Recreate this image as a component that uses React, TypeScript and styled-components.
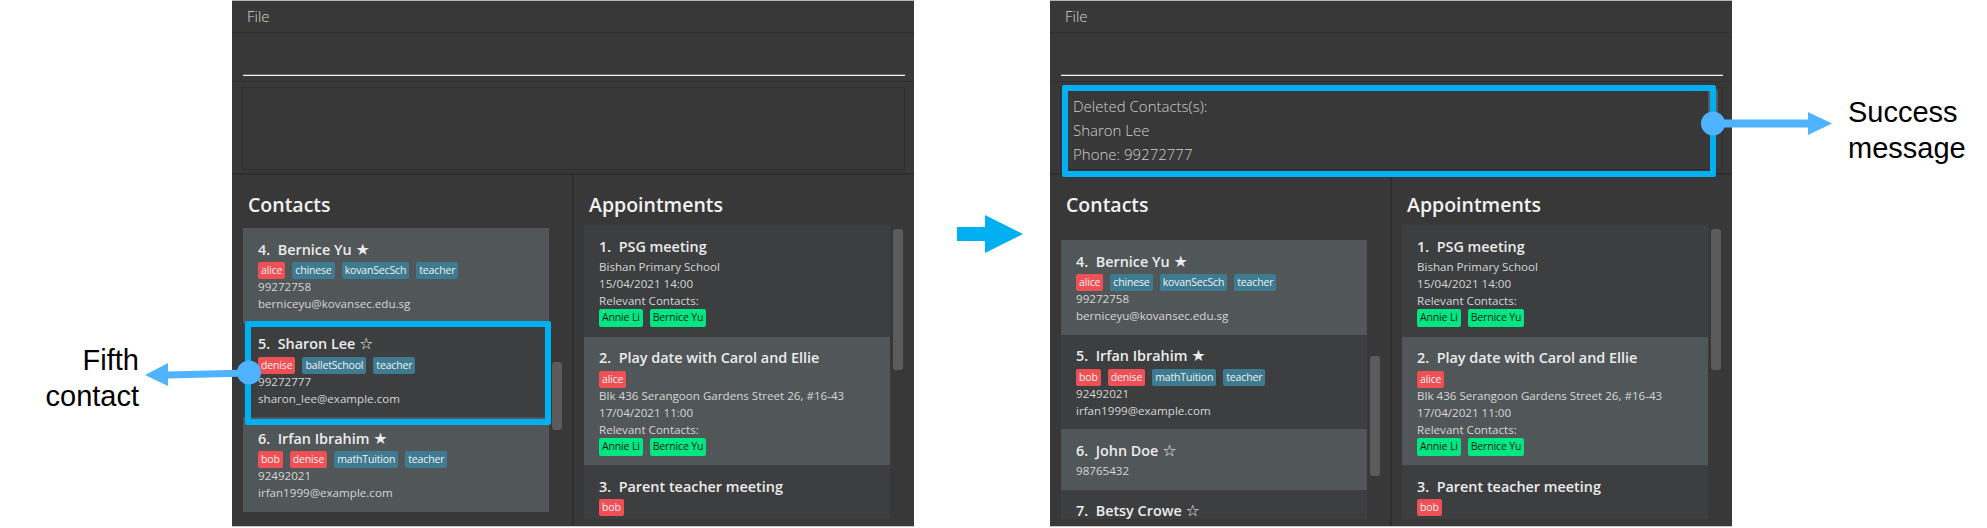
import styled, { createGlobalStyle } from "styled-components";

const GlobalStyle = createGlobalStyle`
  html, body { margin: 0; padding: 0; background: #ffffff; }
  * { box-sizing: border-box; }
`;

const UI_FONT = `"Open Sans", "Noto Sans", sans-serif`;
const ARIAL = `"Liberation Sans", Arial, sans-serif`;

const Page = styled.div`
  position: relative;
  display: flex;
  width: 1987px;
  height: 528px;
  overflow: hidden;
  background: #ffffff;
`;

const LeftNote = styled.div`
  width: 232px;
  padding: 342px 93px 0 0;
  font: 29px/36px ${ARIAL};
  color: #000000;
  text-align: right;
`;

const RightNote = styled.div`
  padding: 94px 0 0 116px;
  font: 29px/36px ${ARIAL};
  color: #000000;
`;

const Gutter = styled.div`
  width: 136px;
  padding: 215px 0 0 43px;
`;

const Window = styled.div`
  position: relative;
  display: flex;
  flex-direction: column;
  width: 682px;
  height: 527px;
  background: #383838;
  border-top: 1px solid #b5b5b5;
  border-bottom: 1px solid #c8c8c8;
  font-family: ${UI_FONT};
`;

const MenuBar = styled.div`
  height: 32px;
  padding-left: 15px;
  border-bottom: 1px solid #2e2e2e;
  font-size: 15px;
  font-weight: 300;
  line-height: 30px;
  color: #d6d6d6;
`;

const CommandPane = styled.div`
  height: 49px;
  padding: 0 9px 0 11px;
  border-bottom: 1px solid #2e2e2e;
`;

const CommandInput = styled.input`
  display: block;
  width: 100%;
  height: 43px;
  padding: 0;
  background: transparent;
  border: none;
  border-bottom: 1px solid #f2f2f2;
  box-shadow: 0 -1px 0 #6a6a6a inset;
  outline: none;
`;

const ResultPane = styled.div`
  height: 93px;
  padding: 5px 9px 4px 10px;
  border-bottom: 2px solid #2e2e2e;
`;

const ResultBox = styled.div`
  display: flex;
  justify-content: space-between;
  height: 83px;
  padding: 6px 4px 0 12px;
  border: 1px solid #2e2e2e;
`;

const ResultText = styled.div`
  font-size: 15px;
  font-weight: 300;
  line-height: 24px;
  color: #cfcfcf;
`;

const Columns = styled.div`
  display: flex;
  flex: 1;
  min-height: 0;
`;

const Column = styled.section<{ $width?: number; $inset: number }>`
  display: flex;
  flex-direction: column;
  ${(p) => (p.$width ? `width: ${p.$width}px;` : "flex: 1;")}
  min-width: 0;
  padding: 15px 0 7px ${(p) => p.$inset}px;
  ${(p) => (p.$width ? "border-right: 2px solid #2e2e2e;" : "")}
`;

const ColumnTitle = styled.h2<{ $gap: number }>`
  margin: 0 0 ${(p) => p.$gap}px 5px;
  font-size: 19.5px;
  font-weight: 600;
  line-height: 30px;
  color: #f2f2f2;
`;

const ListRow = styled.div`
  display: flex;
  flex: 1;
  gap: 3px;
  min-height: 0;
`;

const List = styled.div`
  width: 306px;
  overflow: hidden;
`;

const ScrollThumb = styled.div<{ $top: number; $height: number }>`
  width: 10px;
  height: ${(p) => p.$height}px;
  margin-top: ${(p) => p.$top}px;
  background: #5b5b5b;
  border-radius: 3px;
`;

const Card = styled.div<{ $odd: boolean }>`
  padding: 12.5px 10px 9.5px 15px;
  background: ${(p) => (p.$odd ? "#515658" : "#3c3e3f")};
`;

const Name = styled.div`
  font-size: 14.4px;
  font-weight: 600;
  line-height: 18px;
  color: #ececec;
  white-space: pre;
`;

const Star = styled.span`
  font-family: "DejaVu Sans", sans-serif;
  font-size: 16px;
  font-weight: 400;
  line-height: 18px;
`;

const TagRow = styled.div<{ $offset?: number }>`
  display: flex;
  gap: 7px;
  margin-top: ${(p) => p.$offset ?? 3.5}px;
`;

const Tag = styled.span<{ $kind: "red" | "blue" | "green" }>`
  height: ${(p) => (p.$kind === "green" ? 18 : 17)}px;
  padding: 0 3px;
  border-radius: 2px;
  font-size: 10.5px;
  letter-spacing: -0.15px;
  line-height: 17px;
  color: ${(p) => (p.$kind === "green" ? "#0b1f16" : "#f0f0f0")};
  background: ${(p) =>
    p.$kind === "red" ? "#ef5055" : p.$kind === "blue" ? "#3e7b91" : "#00e683"};
`;

const Detail = styled.div`
  padding-bottom: 2px;
  font-size: 11.6px;
  line-height: 15px;
  color: #d6d6d6;
`;

const Highlight = styled.div<{ $left: number; $top: number; $width: number; $height: number }>`
  position: absolute;
  left: ${(p) => p.$left}px;
  top: ${(p) => p.$top}px;
  width: ${(p) => p.$width}px;
  height: ${(p) => p.$height}px;
  border: 6px solid #00b0f0;
  border-radius: 2px;
  pointer-events: none;
`;

const Callouts = styled.svg`
  position: absolute;
  left: 0;
  top: 0;
  pointer-events: none;
`;

type TagData = { text: string; kind: "red" | "blue" };

const tag = (kind: "red" | "blue") => (text: string): TagData => ({ text, kind });
const red = tag("red");
const blue = tag("blue");

type Contact = { name: string; star: boolean; tags: TagData[]; phone: string; email?: string };

const bernice: Contact = {
  name: "4.  Bernice Yu",
  star: true,
  tags: [red("alice"), blue("chinese"), blue("kovanSecSch"), blue("teacher")],
  phone: "99272758",
  email: "berniceyu@kovansec.edu.sg",
};

const irfanTags = [red("bob"), red("denise"), blue("mathTuition"), blue("teacher")];

const before: Contact[] = [
  bernice,
  {
    name: "5.  Sharon Lee",
    star: false,
    tags: [red("denise"), blue("balletSchool"), blue("teacher")],
    phone: "99272777",
    email: "sharon_lee@example.com",
  },
  { name: "6.  Irfan Ibrahim", star: true, tags: irfanTags, phone: "92492021", email: "irfan1999@example.com" },
];

const after: Contact[] = [
  bernice,
  { name: "5.  Irfan Ibrahim", star: true, tags: irfanTags, phone: "92492021", email: "irfan1999@example.com" },
  { name: "6.  John Doe", star: false, tags: [], phone: "98765432" },
  { name: "7.  Betsy Crowe", star: false, tags: [], phone: "" },
];

type Appointment = { name: string; tags: TagData[]; place: string; date: string };

const appointments: Appointment[] = [
  { name: "1.  PSG meeting", tags: [], place: "Bishan Primary School", date: "15/04/2021 14:00" },
  {
    name: "2.  Play date with Carol and Ellie",
    tags: [red("alice")],
    place: "Blk 436 Serangoon Gardens Street 26, #16-43",
    date: "17/04/2021 11:00",
  },
  { name: "3.  Parent teacher meeting", tags: [red("bob")], place: "", date: "" },
];

function ContactList({ items }: { items: Contact[] }) {
  return (
    <List>
      {items.map((c, i) => (
        <Card key={c.name} $odd={i % 2 === 0}>
          <Name>
            {c.name} <Star>{c.star ? "★" : "☆"}</Star>
          </Name>
          <TagRow>
            {c.tags.map((t) => (
              <Tag key={t.text} $kind={t.kind}>
                {t.text}
              </Tag>
            ))}
          </TagRow>
          {c.phone && <Detail>{c.phone}</Detail>}
          {c.email && <Detail>{c.email}</Detail>}
        </Card>
      ))}
    </List>
  );
}

function AppointmentList() {
  return (
    <List>
      {appointments.map((a, i) => (
        <Card key={a.name} $odd={i % 2 === 1}>
          <Name>{a.name}</Name>
          <TagRow>
            {a.tags.map((t) => (
              <Tag key={t.text} $kind={t.kind}>
                {t.text}
              </Tag>
            ))}
          </TagRow>
          {a.place && (
            <>
              <Detail>{a.place}</Detail>
              <Detail>{a.date}</Detail>
              <Detail>Relevant Contacts:</Detail>
              <TagRow $offset={-1}>
                <Tag $kind="green">Annie Li</Tag>
                <Tag $kind="green">Bernice Yu</Tag>
              </TagRow>
            </>
          )}
        </Card>
      ))}
    </List>
  );
}

export default function App() {
  return (
    <Page>
      <GlobalStyle />
      <LeftNote>
        Fifth
        <br />
        contact
      </LeftNote>

      <Window>
        <MenuBar>File</MenuBar>
        <CommandPane>
          <CommandInput />
        </CommandPane>
        <ResultPane>
          <ResultBox />
        </ResultPane>
        <Columns>
          <Column $width={342} $inset={11}>
            <ColumnTitle $gap={8}>Contacts</ColumnTitle>
            <ListRow>
              <ContactList items={before} />
              <ScrollThumb $top={134} $height={68} />
            </ListRow>
          </Column>
          <Column $inset={10}>
            <ColumnTitle $gap={5}>Appointments</ColumnTitle>
            <ListRow>
              <AppointmentList />
              <ScrollThumb $top={4} $height={141} />
            </ListRow>
          </Column>
        </Columns>
        <Highlight $left={13} $top={320} $width={306} $height={104} />
      </Window>

      <Gutter>
        <svg width="66" height="38" viewBox="0 0 66 38">
          <path d="M0 12H28V0L66 19L28 38V26H0Z" fill="#00b0f0" />
        </svg>
      </Gutter>

      <Window>
        <MenuBar>File</MenuBar>
        <CommandPane>
          <CommandInput />
        </CommandPane>
        <ResultPane>
          <ResultBox>
            <ResultText>
              Deleted Contacts(s):
              <br />
              Sharon Lee
              <br />
              Phone: 99272777
            </ResultText>
            <ScrollThumb $top={-5} $height={40} />
          </ResultBox>
        </ResultPane>
        <Columns>
          <Column $width={342} $inset={11}>
            <ColumnTitle $gap={20}>Contacts</ColumnTitle>
            <ListRow>
              <ContactList items={after} />
              <ScrollThumb $top={116} $height={120} />
            </ListRow>
          </Column>
          <Column $inset={10}>
            <ColumnTitle $gap={5}>Appointments</ColumnTitle>
            <ListRow>
              <AppointmentList />
              <ScrollThumb $top={4} $height={141} />
            </ListRow>
          </Column>
        </Columns>
        <Highlight $left={12} $top={84} $width={654} $height={92} />
      </Window>

      <RightNote>
        Success
        <br />
        message
      </RightNote>

      <Callouts width="1987" height="528" viewBox="0 0 1987 528">
        <ellipse cx="249" cy="372.5" rx="12" ry="12" fill="#4fb3ff" />
        <path d="M168 371.5L249 369.5V376.5L168 378.5V386L145 375L168 363Z" fill="#4fb3ff" />
        <circle cx="1713" cy="123.5" r="12" fill="#4fb3ff" />
        <path d="M1713 119.5H1808V112L1832 123.5L1808 135V127.5H1713Z" fill="#4fb3ff" />
      </Callouts>
    </Page>
  );
}
